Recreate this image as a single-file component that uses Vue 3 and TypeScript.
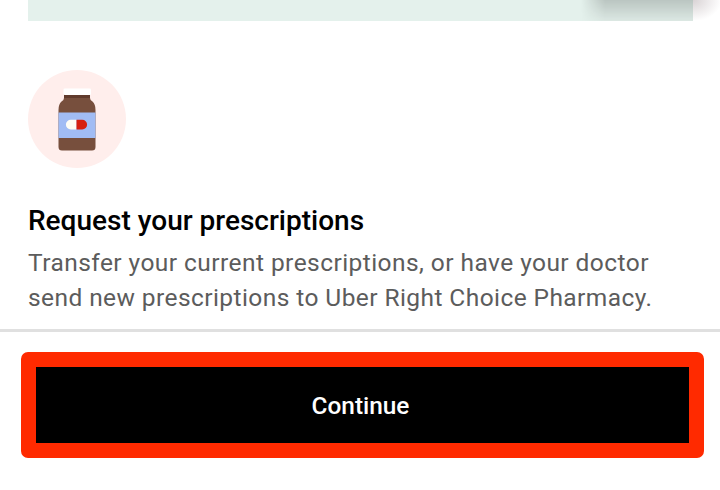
<script setup lang="ts">
interface Line {
  text: string
  tone: string
}

const title: string = 'Request your prescriptions'
const lines: Line[] = [
  { text: 'Transfer your current prescriptions, or have your doctor', tone: 'first' },
  { text: 'send new prescriptions to Uber Right Choice Pharmacy.', tone: 'second' },
]
</script>

<template>
  <main class="screen">
    <section class="content">
      <div class="banner"><div class="banner-shadow"></div></div>
      <div class="banner-spill"></div>
      <svg class="bottle" viewBox="0 0 98 98" aria-hidden="true">
        <circle cx="49" cy="49" r="49" fill="#ffeeec" />
        <path d="M36 24h26v4q0 2 2.500 3.500Q67.500 34 67.500 40v37q0 3.500-3.500 3.500H34q-3.500 0-3.500-3.500V40q0-6 3-8.500Q36 30 36 28z" fill="#774f3d" />
        <path d="M36 24h26v4H36z" fill="#603a2c" />
        <rect x="35.500" y="18.500" width="27.500" height="6.500" rx="1.200" fill="#fff" />
        <rect x="30.500" y="42.500" width="37" height="25.500" fill="#a1bcf4" />
        <path d="M48.500 49.700H42.800a4.900 4.900 0 0 0 0 9.800h5.700z" fill="#fffdf4" />
        <path d="M48.500 49.700h5.700a4.900 4.900 0 0 1 0 9.800h-5.700z" fill="#d71f0e" />
      </svg>
      <h1 class="title">{{ title }}</h1>
      <p class="description">
        <span v-for="line in lines" :key="line.tone" class="line" :class="line.tone">{{ line.text }}</span>
      </p>
    </section>
    <footer class="footer">
      <button class="continue" type="button">Continue</button>
    </footer>
  </main>
</template>

<style>
body {
  margin: 0;
  background: #fff;
}
</style>

<style scoped>
.screen {
  width: 720px;
  height: 490px;
  display: flex;
  flex-direction: column;
  overflow: hidden;
  background: #fff;
  font-family: Roboto, "Liberation Sans", sans-serif;
}
.content {
  position: relative;
  height: 329px;
  box-sizing: border-box;
  padding: 0 27px 0 28px;
}
.banner {
  position: relative;
  height: 21px;
  overflow: hidden;
  background: #e4f1ec;
}
.banner-shadow {
  position: absolute;
  top: 0;
  right: 0;
  width: 112px;
  height: 21px;
  background: linear-gradient(rgba(0, 0, 0, 0.18), rgba(0, 0, 0, 0.035));
  mask-image: linear-gradient(to right, transparent, #000 24px);
}
.banner-spill {
  position: absolute;
  top: 0;
  right: 0;
  width: 27px;
  height: 20px;
  background: radial-gradient(ellipse at 0 0, rgba(95, 70, 78, 0.24), transparent 75%);
}
.bottle {
  display: block;
  width: 98px;
  height: 98px;
  margin-top: 49px;
}
.title {
  margin: 35px 0 0;
  font-size: 28px;
  line-height: 36px;
  font-weight: 500;
  color: #000;
  white-space: nowrap;
}
.description {
  margin: 6px 0 0;
  font-size: 24.5px;
  font-weight: 400;
  line-height: 35px;
  color: #5c5c5c;
}
.line {
  display: block;
  width: max-content;
  white-space: nowrap;
}
.first {
  letter-spacing: 0.44px;
}
.second {
  letter-spacing: 0.42px;
}
.footer {
  flex: 1;
  box-sizing: border-box;
  border-top: 3px solid #e0e0e0;
  padding: 20px 16px 0 21px;
}
.continue {
  display: block;
  width: 683px;
  height: 106px;
  padding: 2px 4px 0 0;
  border: 15px solid #ff2a00;
  border-radius: 7px;
  background: #000;
  color: #fff;
  font: 500 24.4px/1 Roboto, "Liberation Sans", sans-serif;
}
</style>
